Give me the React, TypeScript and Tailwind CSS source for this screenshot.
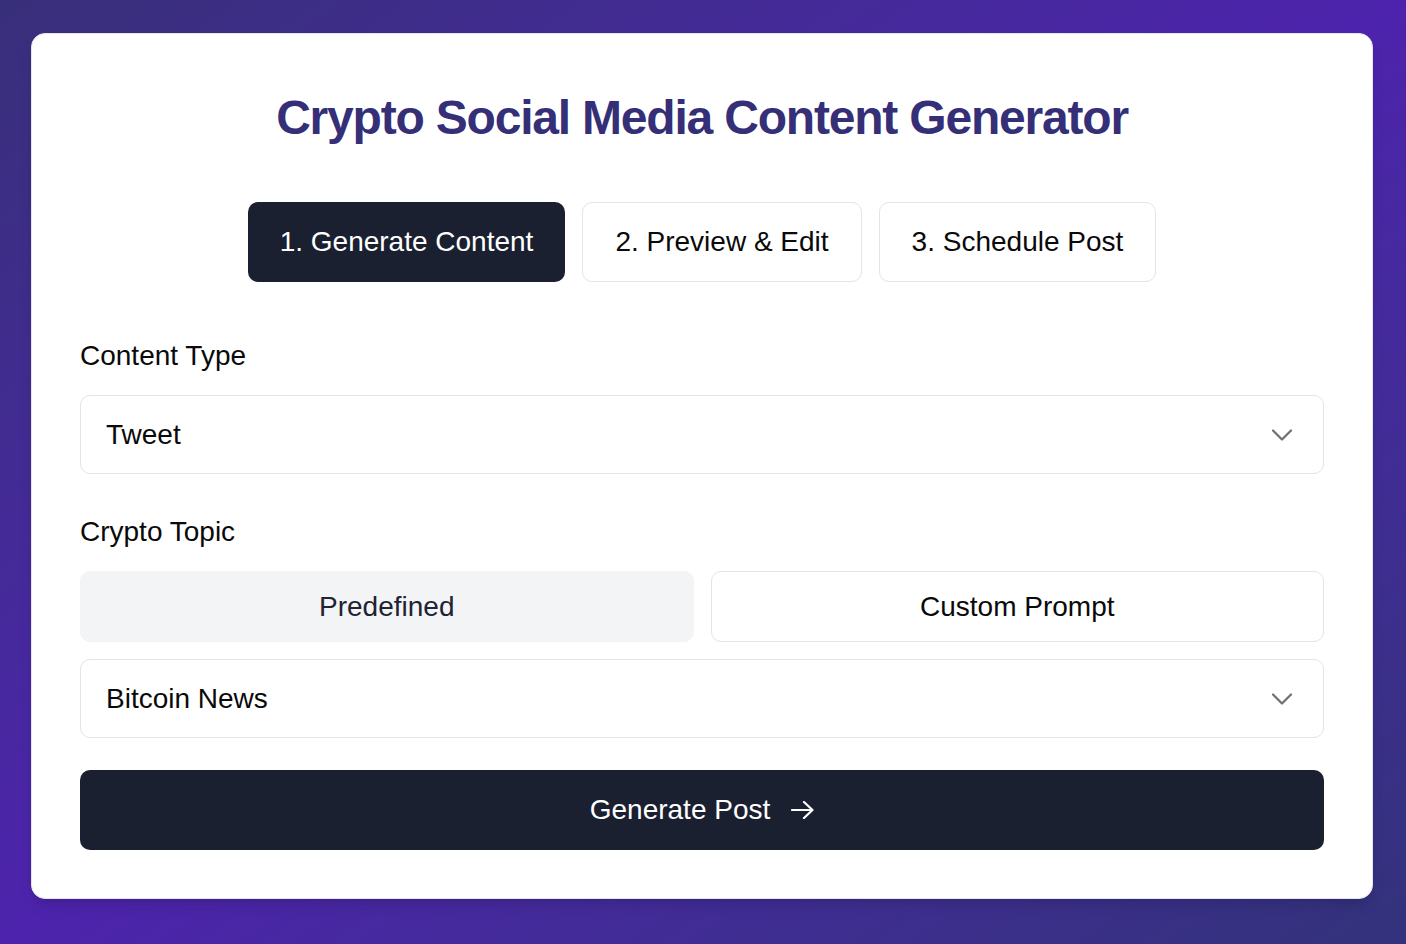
import { useState } from "react";

const contentTypes = ["Tweet", "Thread", "LinkedIn Post"];
const topics = ["Bitcoin News", "Ethereum Updates", "DeFi Trends", "NFT Market"];

function Chevron() {
  return (
    <svg width="22" height="12" viewBox="0 0 22 12" fill="none" className="text-[#6f6f6f]">
      <path d="M2 1.5l9 9 9-9" stroke="currentColor" strokeWidth="2.2" strokeLinecap="round" strokeLinejoin="round" />
    </svg>
  );
}

function Select({ value, options }: { value: string; options: string[] }) {
  return (
    <div className="relative">
      <select
        defaultValue={value}
        className="w-full h-[79px] appearance-none rounded-[10px] border border-[#e2e4e9] bg-white pl-[25px] pr-16 text-[28px] text-[#0a0a0a] outline-none"
      >
        {options.map((o) => (
          <option key={o}>{o}</option>
        ))}
      </select>
      <div className="pointer-events-none absolute right-[31px] top-1/2 -translate-y-1/2">
        <Chevron />
      </div>
    </div>
  );
}

export default function App() {
  const [step, setStep] = useState(1);
  const [mode, setMode] = useState<"predefined" | "custom">("predefined");

  const steps = ["1. Generate Content", "2. Preview & Edit", "3. Schedule Post"];

  return (
    <div
      className="min-h-screen bg-gradient-to-br from-[#382f7a] via-[#4d23ad] to-[#33327b] pl-[31px] pr-[33px] pt-[33px] pb-[45px]"
      style={{ fontFamily: '"Liberation Sans", Arial, sans-serif' }}
    >
      <div className="rounded-[14px] border border-[#e4e4ec] bg-white px-[48px] pt-[48px] pb-[48px] shadow-lg">
        <h1 className="text-center text-[48px] leading-[72px] font-bold tracking-tight text-[#352f77]">
          Crypto Social Media Content Generator
        </h1>

        <div className="mt-[48px] flex justify-center gap-[17px]">
          {steps.map((s, i) => (
            <button
              key={s}
              onClick={() => setStep(i + 1)}
              className={
                step === i + 1
                  ? "h-[80px] rounded-[10px] bg-[#1b2030] px-[32px] text-[28px] text-white"
                  : "h-[80px] rounded-[10px] border border-[#e2e4e9] bg-white px-[32px] text-[28px] text-[#0a0a0a]"
              }
            >
              {s}
            </button>
          ))}
        </div>

        <label className="mt-[54px] block text-[28px] leading-[40px] text-[#0a0a0a]">Content Type</label>
        <div className="mt-[19px]">
          <Select value="Tweet" options={contentTypes} />
        </div>

        <label className="mt-[38px] block text-[28px] leading-[40px] text-[#0a0a0a]">Crypto Topic</label>
        <div className="mt-[19px] grid grid-cols-2 gap-[17px]">
          <button
            onClick={() => setMode("predefined")}
            className={
              mode === "predefined"
                ? "h-[71px] rounded-[10px] border border-[#f3f4f6] bg-[#f3f4f6] text-[28px] text-[#1f2333]"
                : "h-[71px] rounded-[10px] border border-[#e2e4e9] bg-white text-[28px] text-[#0a0a0a]"
            }
          >
            Predefined
          </button>
          <button
            onClick={() => setMode("custom")}
            className={
              mode === "custom"
                ? "h-[71px] rounded-[10px] border border-[#f3f4f6] bg-[#f3f4f6] text-[28px] text-[#1f2333]"
                : "h-[71px] rounded-[10px] border border-[#e2e4e9] bg-white text-[28px] text-[#0a0a0a]"
            }
          >
            Custom Prompt
          </button>
        </div>

        <div className="mt-[17px]">
          <Select value="Bitcoin News" options={topics} />
        </div>

        <button className="mt-[32px] flex h-[80px] w-full items-center justify-center gap-[21px] rounded-[10px] bg-[#1b2030] text-[28px] text-white">
          Generate Post
          <svg width="23" height="18" viewBox="0 0 23 18" fill="none">
            <path d="M1 9h20.5M13 1l8.5 8-8.5 8" stroke="currentColor" strokeWidth="2.2" strokeLinecap="round" strokeLinejoin="round" />
          </svg>
        </button>
      </div>
    </div>
  );
}
